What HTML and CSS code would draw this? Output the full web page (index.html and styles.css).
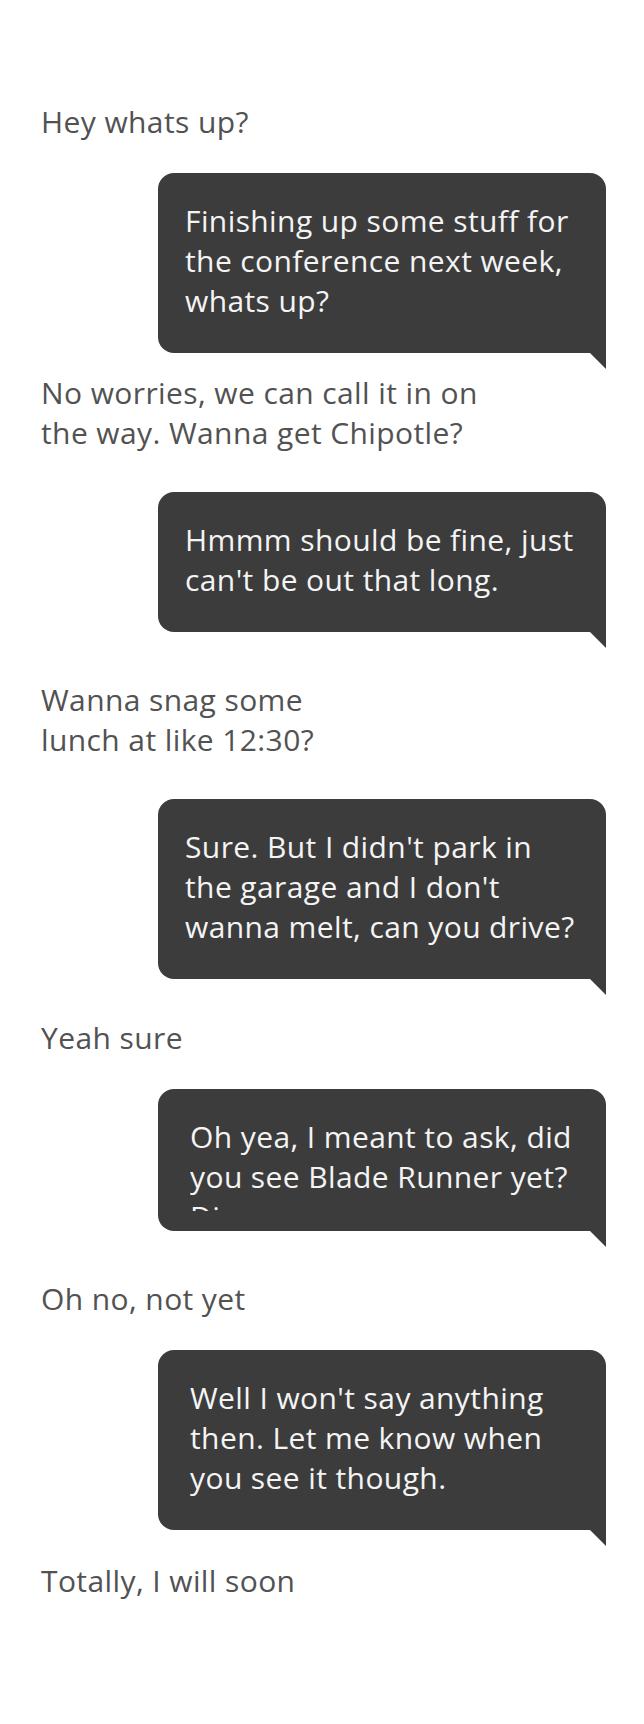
FILE: index.html
```html
<!DOCTYPE html>
<html lang="en">
<head>
<meta charset="utf-8">
<title>Chat</title>
<link rel="stylesheet" href="styles.css">
</head>
<body>
<main class="chat">
  <p class="msg">Hey whats up?</p>
  <div class="bubble gap-m"><p class="text">Finishing up some stuff for<br>the conference next week,<br>whats up?</p></div>
  <p class="msg gap-s">No worries, we can call it in on<br>the way. Wanna get Chipotle?</p>
  <div class="bubble gap-l"><p class="text">Hmmm should be fine, just<br>can't be out that long.</p></div>
  <p class="msg gap-xl">Wanna snag some<br>lunch at like 12:30?</p>
  <div class="bubble gap-l"><p class="text">Sure. But I didn't park in<br>the garage and I don't<br>wanna melt, can you drive?</p></div>
  <p class="msg gap-l">Yeah sure</p>
  <div class="bubble bubble--inset bubble--typing gap-m"><p class="text">Oh yea, I meant to ask, did<br>you see Blade Runner yet?<br>Dinner was awesome</p></div>
  <p class="msg gap-xl">Oh no, not yet</p>
  <div class="bubble bubble--inset gap-m"><p class="text">Well I won't say anything<br>then. Let me know when<br>you see it though.</p></div>
  <p class="msg gap-m">Totally, I will soon</p>
</main>
</body>
</html>
```

FILE: styles.css
```css
html, body {
  margin: 0;
  background: #ffffff;
}

.chat {
  display: flex;
  flex-direction: column;
  padding: 102px 38px 0;
  font-family: "Open Sans", "Noto Sans", sans-serif;
  font-size: 30px;
  line-height: 40px;
  letter-spacing: 0.4px;
}

.msg {
  margin: 0;
  padding-left: 3px;
  color: #525252;
  white-space: nowrap;
}

.bubble {
  position: relative;
  align-self: flex-end;
  box-sizing: border-box;
  width: 448px;
  padding: 28px 27px 32px;
  background: #3c3c3c;
  color: #f4f4f4;
  border-radius: 16px 16px 0 16px;
}

.bubble::after {
  content: "";
  position: absolute;
  right: 0;
  top: 100%;
  width: 0;
  height: 0;
  border-top: 16px solid #3c3c3c;
  border-left: 16px solid transparent;
}

.bubble--inset {
  padding-left: 32px;
}

.bubble--typing {
  padding-bottom: 20px;
}

.bubble--typing .text {
  height: 94px;
  overflow: hidden;
}

.text {
  margin: 0;
  white-space: nowrap;
}

.gap-s { margin-top: 20px; }
.gap-m { margin-top: 31px; }
.gap-l { margin-top: 39px; }
.gap-xl { margin-top: 48px; }
```
